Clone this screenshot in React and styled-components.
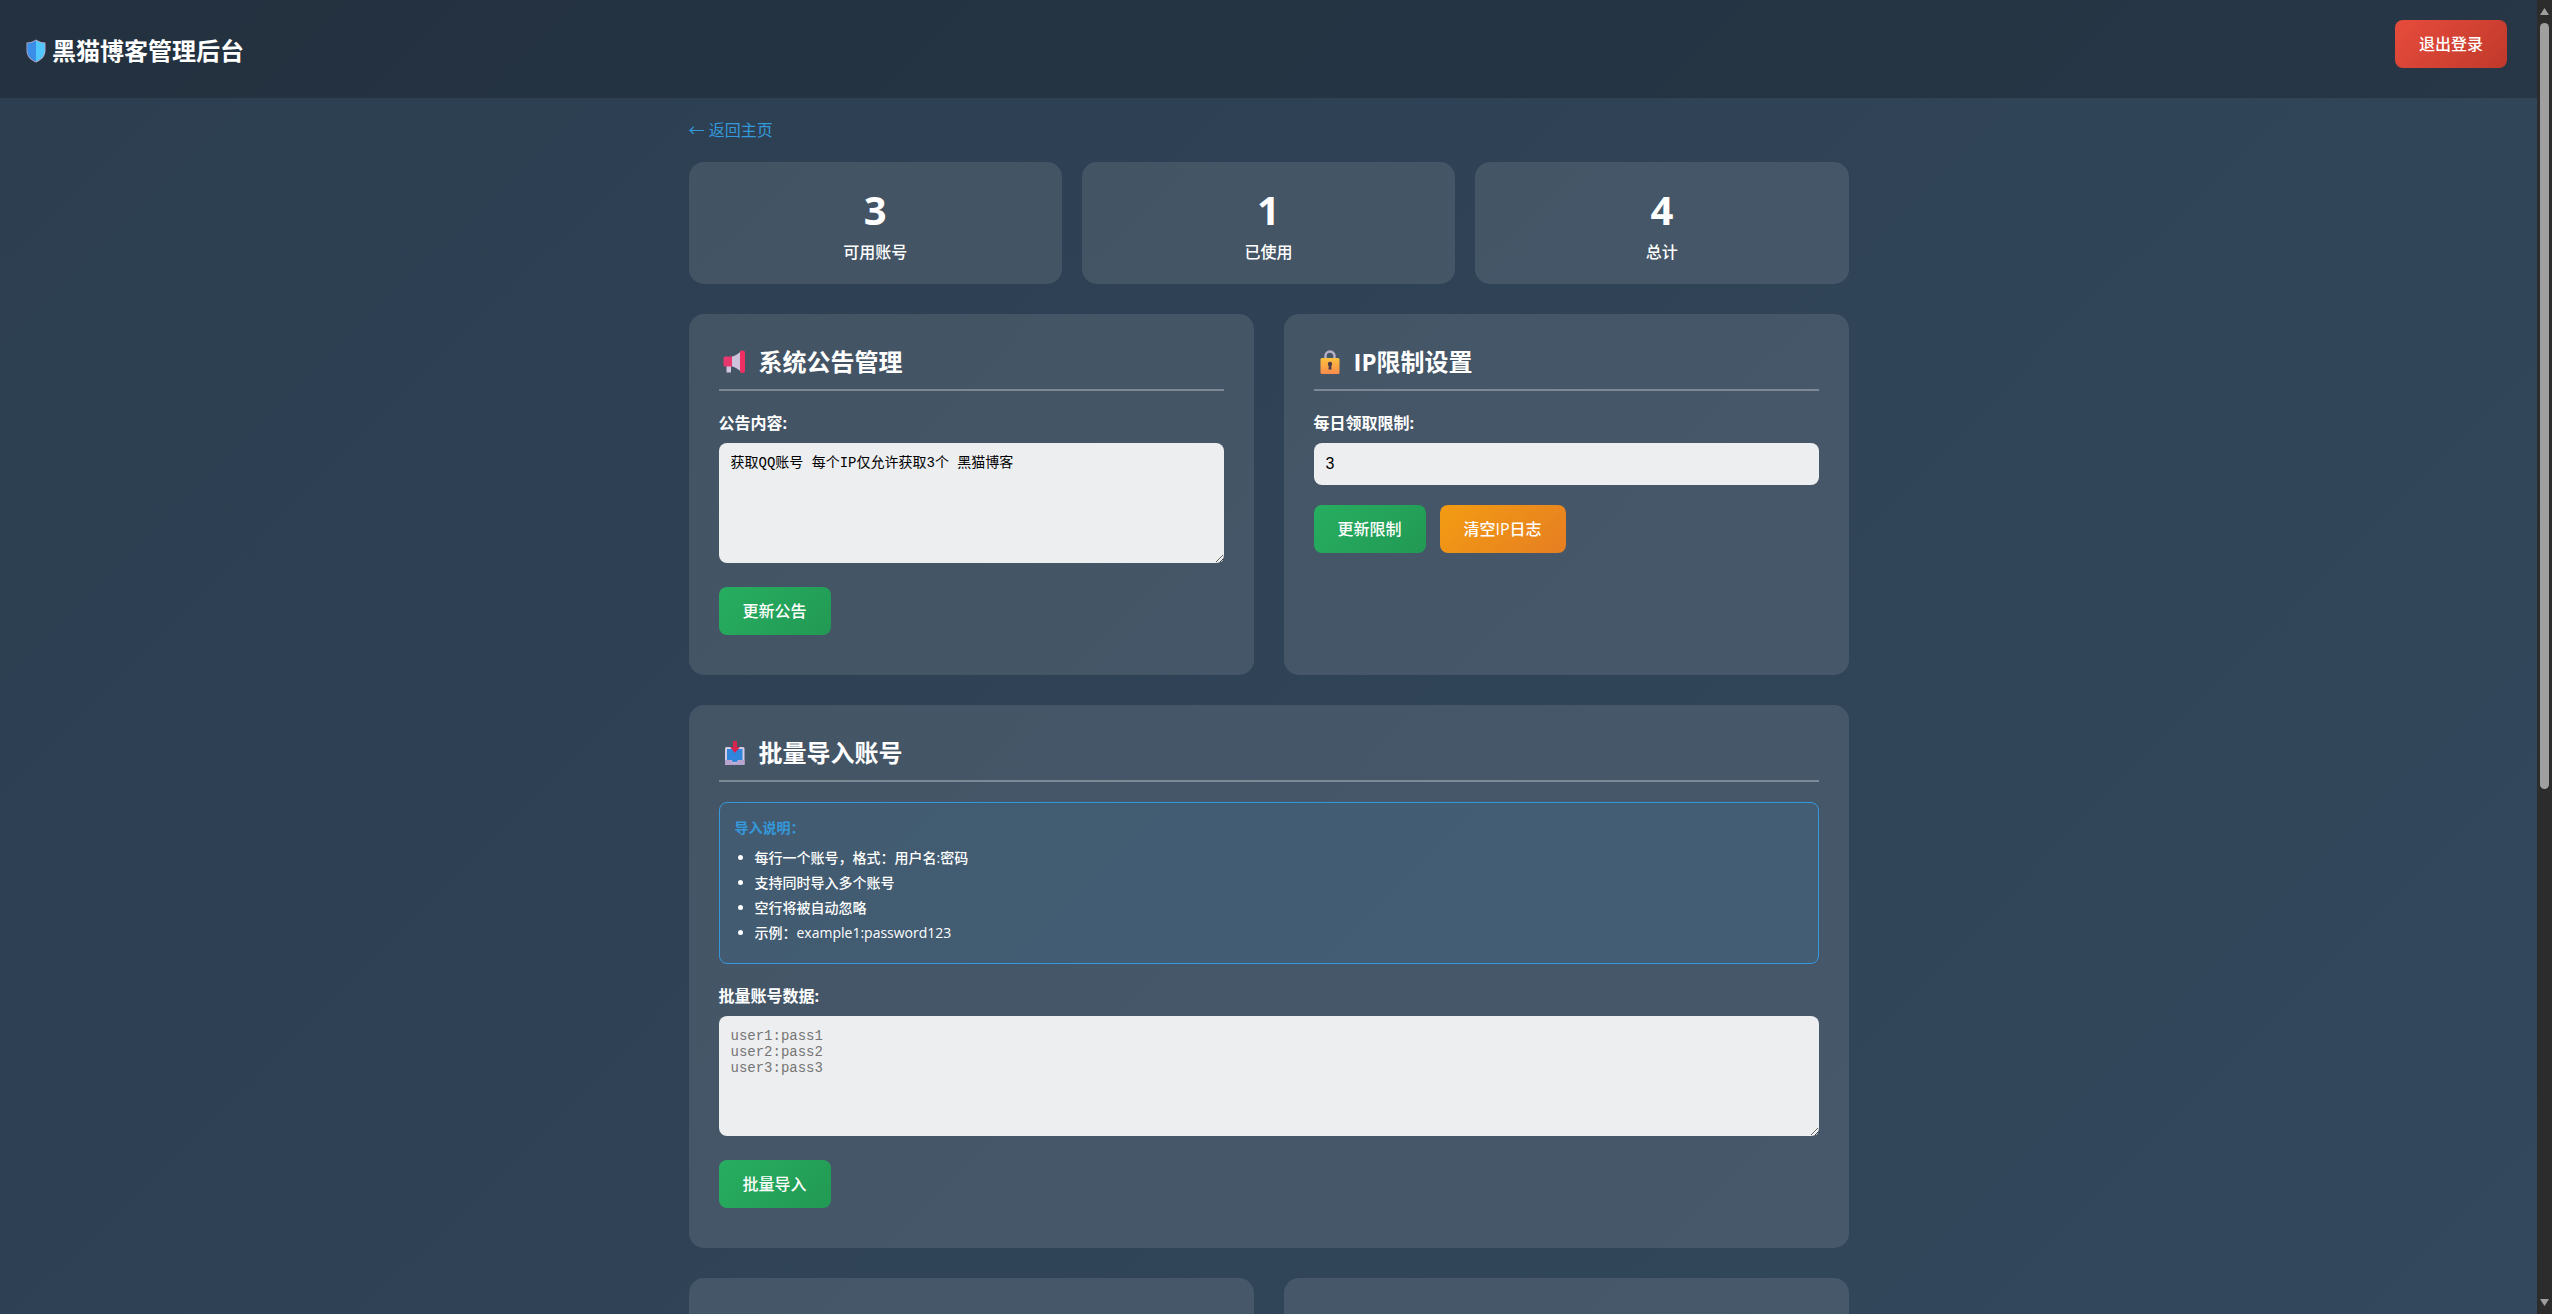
import { useState } from "react";
import styled, { createGlobalStyle } from "styled-components";

const GlobalStyle = createGlobalStyle`
  * {
    box-sizing: border-box;
    margin: 0;
    padding: 0;
  }

  body {
    font-family: "Open Sans", "Noto Sans CJK SC", sans-serif;
    font-size: 16px;
    color: #fff;
    background: #2c3e50;
  }
`;

const Shell = styled.div`
  display: flex;
  height: 100vh;
`;

const Page = styled.div`
  flex: 1;
  overflow-y: auto;
  scrollbar-width: none;
`;

const PageInner = styled.div`
  min-height: 100%;
  background: linear-gradient(135deg, #2c3e50, #34495e);
`;

const ScrollTrack = styled.div`
  display: flex;
  flex-direction: column;
  align-items: center;
  gap: 8px;
  width: 15px;
  padding: 8px 0;
  background: #2c2c2c;
`;

const ScrollThumb = styled.div`
  width: 9px;
  height: 59%;
  margin-bottom: auto;
  border-radius: 5px;
  background: #9f9f9f;
`;

const Header = styled.header`
  display: flex;
  justify-content: space-between;
  align-items: flex-end;
  padding: 20px;
  background: rgba(0, 0, 0, 0.2);
`;

const Brand = styled.h1`
  display: flex;
  align-items: center;
  font-size: 24px;
  line-height: 54px;
`;

const Container = styled.main`
  max-width: 1200px;
  margin: 0 auto;
  padding: 20px;
`;

const BackLink = styled.a`
  display: inline-block;
  margin-bottom: 20px;
  line-height: 24px;
  color: #3498db;
  text-decoration: none;
`;

const Stats = styled.div`
  display: grid;
  grid-template-columns: repeat(3, 1fr);
  gap: 20px;
  margin-bottom: 30px;
`;

const StatCard = styled.div`
  padding: 20px;
  border-radius: 15px;
  text-align: center;
  background: rgba(255, 255, 255, 0.1);
`;

const StatNumber = styled.div`
  margin-bottom: 2px;
  font-size: 40px;
  font-weight: 700;
  line-height: 56px;
`;

const StatLabel = styled.div`
  font-weight: 500;
  line-height: 24px;
`;

const Sections = styled.div`
  display: grid;
  grid-template-columns: 1fr 1fr;
  gap: 30px;
`;

const Card = styled.section`
  grid-column: ${(props) => (props.$wide ? "1 / -1" : "auto")};
  min-height: ${(props) => (props.$tall ? "420px" : "0")};
  padding: 30px;
  border-radius: 15px;
  background: rgba(255, 255, 255, 0.1);
`;

const CardTitle = styled.h2`
  display: flex;
  align-items: center;
  gap: 8px;
  margin-bottom: 20px;
  padding-bottom: 9px;
  border-bottom: 2px solid rgba(255, 255, 255, 0.3);
  font-size: 24px;
  line-height: 36px;
`;

const Field = styled.div`
  margin-bottom: ${(props) => (props.$area ? "24px" : "20px")};
`;

const Label = styled.label`
  display: block;
  margin-bottom: 8px;
  font-weight: 700;
  line-height: 24px;
`;

const Input = styled.input`
  display: block;
  width: 100%;
  height: 42px;
  padding: 12px;
  border: none;
  border-radius: 8px;
  font-family: "Liberation Sans", sans-serif;
  font-size: 16px;
  color: #000;
  background: rgba(255, 255, 255, 0.9);
  appearance: textfield;
`;

const TextArea = styled.textarea`
  display: block;
  width: 100%;
  height: 120px;
  padding: 12px;
  border: none;
  border-radius: 8px;
  font-family: "Liberation Mono", "Noto Sans CJK SC", monospace;
  font-size: 14px;
  line-height: 16px;
  color: #000;
  background: rgba(255, 255, 255, 0.9);
  resize: vertical;

  &::placeholder {
    color: #757575;
  }
`;

const colors = {
  success: "linear-gradient(135deg, #27ae60, #229954)",
  warning: "linear-gradient(135deg, #f39c12, #e67e22)",
  danger: "linear-gradient(135deg, #e74c3c, #c0392b)",
};

const Button = styled.button`
  padding: 12px 24px;
  border: none;
  border-radius: 8px;
  font-family: inherit;
  font-size: 16px;
  font-weight: 500;
  line-height: 24px;
  color: #fff;
  background: ${(props) => colors[props.$variant]};
  cursor: pointer;
`;

const LogoutButton = styled(Button)`
  margin: 0 10px 10px 0;
`;

const ButtonRow = styled.div`
  display: flex;
  flex-wrap: wrap;
  gap: 14px;
  margin-bottom: 10px;
`;

const InfoBox = styled.div`
  margin-bottom: 20px;
  padding: 15px;
  border: 1px solid #3498db;
  border-radius: 8px;
  font-size: 14px;
  line-height: 20px;
  background: rgba(52, 152, 219, 0.1);

  h4 {
    margin-bottom: 10px;
    color: #3498db;
  }

  ul {
    padding-left: 20px;
    font-weight: 500;
  }

  li {
    margin-bottom: 5px;
  }
`;

const Icon = styled.svg`
  flex: none;
  width: 32px;
  height: 24px;
`;

function ShieldIcon() {
  return (
    <Icon viewBox="0 0 32 24" aria-hidden="true">
      <path d="M16 0.500c3 2 5.500 2.800 9.500 3v8c0 5.500-3.500 9.500-9.500 12-6-2.500-9.500-6.500-9.500-12v-8c4-.2 6.500-1 9.500-3z" fill="#b3a9c4" />
      <path d="M16 1.500c2.500 1.600 5 2.500 8.700 2.800v7.200c0 4.800-3.200 8.700-8.700 11.100z" fill="#50c8fc" />
      <path d="M16 1.500c-2.500 1.600-5 2.500-8.700 2.800v7.200c0 4.800 3.200 8.700 8.700 11.100z" fill="#3a8ee8" />
    </Icon>
  );
}

function MegaphoneIcon() {
  return (
    <Icon viewBox="0 0 32 24" aria-hidden="true">
      <path d="M7.500 14h4.500v8.500H7.500z" fill="#cfc5dc" />
      <path d="M12 7C16 6 19 4 22.500 1v21C19 19 16 17 12 16z" fill="#cdc3dc" />
      <path d="M6 6.500h7v10H6A1.500 1.500 0 0 1 4.500 15V8A1.500 1.500 0 0 1 6 6.500z" fill="#e8386e" />
      <rect x="21" y="0.500" width="5" height="22.500" rx="2" fill="#ee2f62" />
    </Icon>
  );
}

function LockIcon() {
  return (
    <Icon viewBox="0 0 32 24" aria-hidden="true">
      <defs>
        <linearGradient id="lockBody" x1="0" y1="0" x2="0" y2="1">
          <stop offset="0" stopColor="#ffc13d" />
          <stop offset="1" stopColor="#f98b4c" />
        </linearGradient>
      </defs>
      <path d="M11.500 9V6a4.500 4.500 0 0 1 9 0v3" fill="none" stroke="#b9afc6" strokeWidth="2.400" />
      <rect x="6.500" y="8" width="19" height="16" rx="1.500" fill="url(#lockBody)" />
      <circle cx="16" cy="14" r="2.200" fill="#4a3a4c" />
      <path d="M15 14h2l.6 5.500h-3.200z" fill="#4a3a4c" />
    </Icon>
  );
}

function InboxIcon() {
  return (
    <Icon viewBox="0 0 32 24" aria-hidden="true">
      <rect x="6" y="6" width="19.500" height="18" rx="1.500" fill="#d5cbe4" />
      <path d="M8 8h15.500v11H19l-1 2h-4.500l-1-2H8z" fill="#2f86dc" />
      <path d="M6 19h6l1.200 2.500h5.100L19.500 19h6v5H6z" fill="#b7a5d0" />
      <path d="M14 0h4v6h3l-5 6-5-6h3z" fill="#d6244f" />
    </Icon>
  );
}

export default function App() {
  const [notice, setNotice] = useState("获取QQ账号 每个IP仅允许获取3个 黑猫博客");
  const [limit, setLimit] = useState(3);
  const [accounts, setAccounts] = useState("");

  return (
    <>
      <GlobalStyle />
      <Shell>
        <Page>
          <PageInner>
            <Header>
              <Brand>
                <ShieldIcon />
                黑猫博客管理后台
              </Brand>
              <LogoutButton type="button" $variant="danger">
                退出登录
              </LogoutButton>
            </Header>
            <Container>
              <BackLink href="#">← 返回主页</BackLink>
              <Stats>
                <StatCard>
                  <StatNumber>3</StatNumber>
                  <StatLabel>可用账号</StatLabel>
                </StatCard>
                <StatCard>
                  <StatNumber>1</StatNumber>
                  <StatLabel>已使用</StatLabel>
                </StatCard>
                <StatCard>
                  <StatNumber>4</StatNumber>
                  <StatLabel>总计</StatLabel>
                </StatCard>
              </Stats>
              <Sections>
                <Card>
                  <CardTitle>
                    <MegaphoneIcon />
                    系统公告管理
                  </CardTitle>
                  <Field $area>
                    <Label htmlFor="notice">公告内容:</Label>
                    <TextArea
                      id="notice"
                      value={notice}
                      onChange={(e) => setNotice(e.target.value)}
                    />
                  </Field>
                  <ButtonRow>
                    <Button type="button" $variant="success">
                      更新公告
                    </Button>
                  </ButtonRow>
                </Card>
                <Card>
                  <CardTitle>
                    <LockIcon />
                    IP限制设置
                  </CardTitle>
                  <Field>
                    <Label htmlFor="limit">每日领取限制:</Label>
                    <Input
                      id="limit"
                      type="number"
                      value={limit}
                      onChange={(e) => setLimit(e.target.value)}
                    />
                  </Field>
                  <ButtonRow>
                    <Button type="button" $variant="success">
                      更新限制
                    </Button>
                    <Button type="button" $variant="warning">
                      清空IP日志
                    </Button>
                  </ButtonRow>
                </Card>
                <Card $wide>
                  <CardTitle>
                    <InboxIcon />
                    批量导入账号
                  </CardTitle>
                  <InfoBox>
                    <h4>导入说明：</h4>
                    <ul>
                      <li>每行一个账号，格式：用户名:密码</li>
                      <li>支持同时导入多个账号</li>
                      <li>空行将被自动忽略</li>
                      <li>示例：example1:password123</li>
                    </ul>
                  </InfoBox>
                  <Field $area>
                    <Label htmlFor="accounts">批量账号数据:</Label>
                    <TextArea
                      id="accounts"
                      placeholder={"user1:pass1\nuser2:pass2\nuser3:pass3"}
                      value={accounts}
                      onChange={(e) => setAccounts(e.target.value)}
                    />
                  </Field>
                  <ButtonRow>
                    <Button type="button" $variant="success">
                      批量导入
                    </Button>
                  </ButtonRow>
                </Card>
                <Card $tall />
                <Card $tall />
              </Sections>
            </Container>
          </PageInner>
        </Page>
        <ScrollTrack aria-hidden="true">
          <svg width="9" height="7" viewBox="0 0 9 7">
            <path d="M4.500 0 9 7H0z" fill="#9f9f9f" />
          </svg>
          <ScrollThumb />
          <svg width="9" height="7" viewBox="0 0 9 7">
            <path d="M0 0h9L4.500 7z" fill="#9f9f9f" />
          </svg>
        </ScrollTrack>
      </Shell>
    </>
  );
}
